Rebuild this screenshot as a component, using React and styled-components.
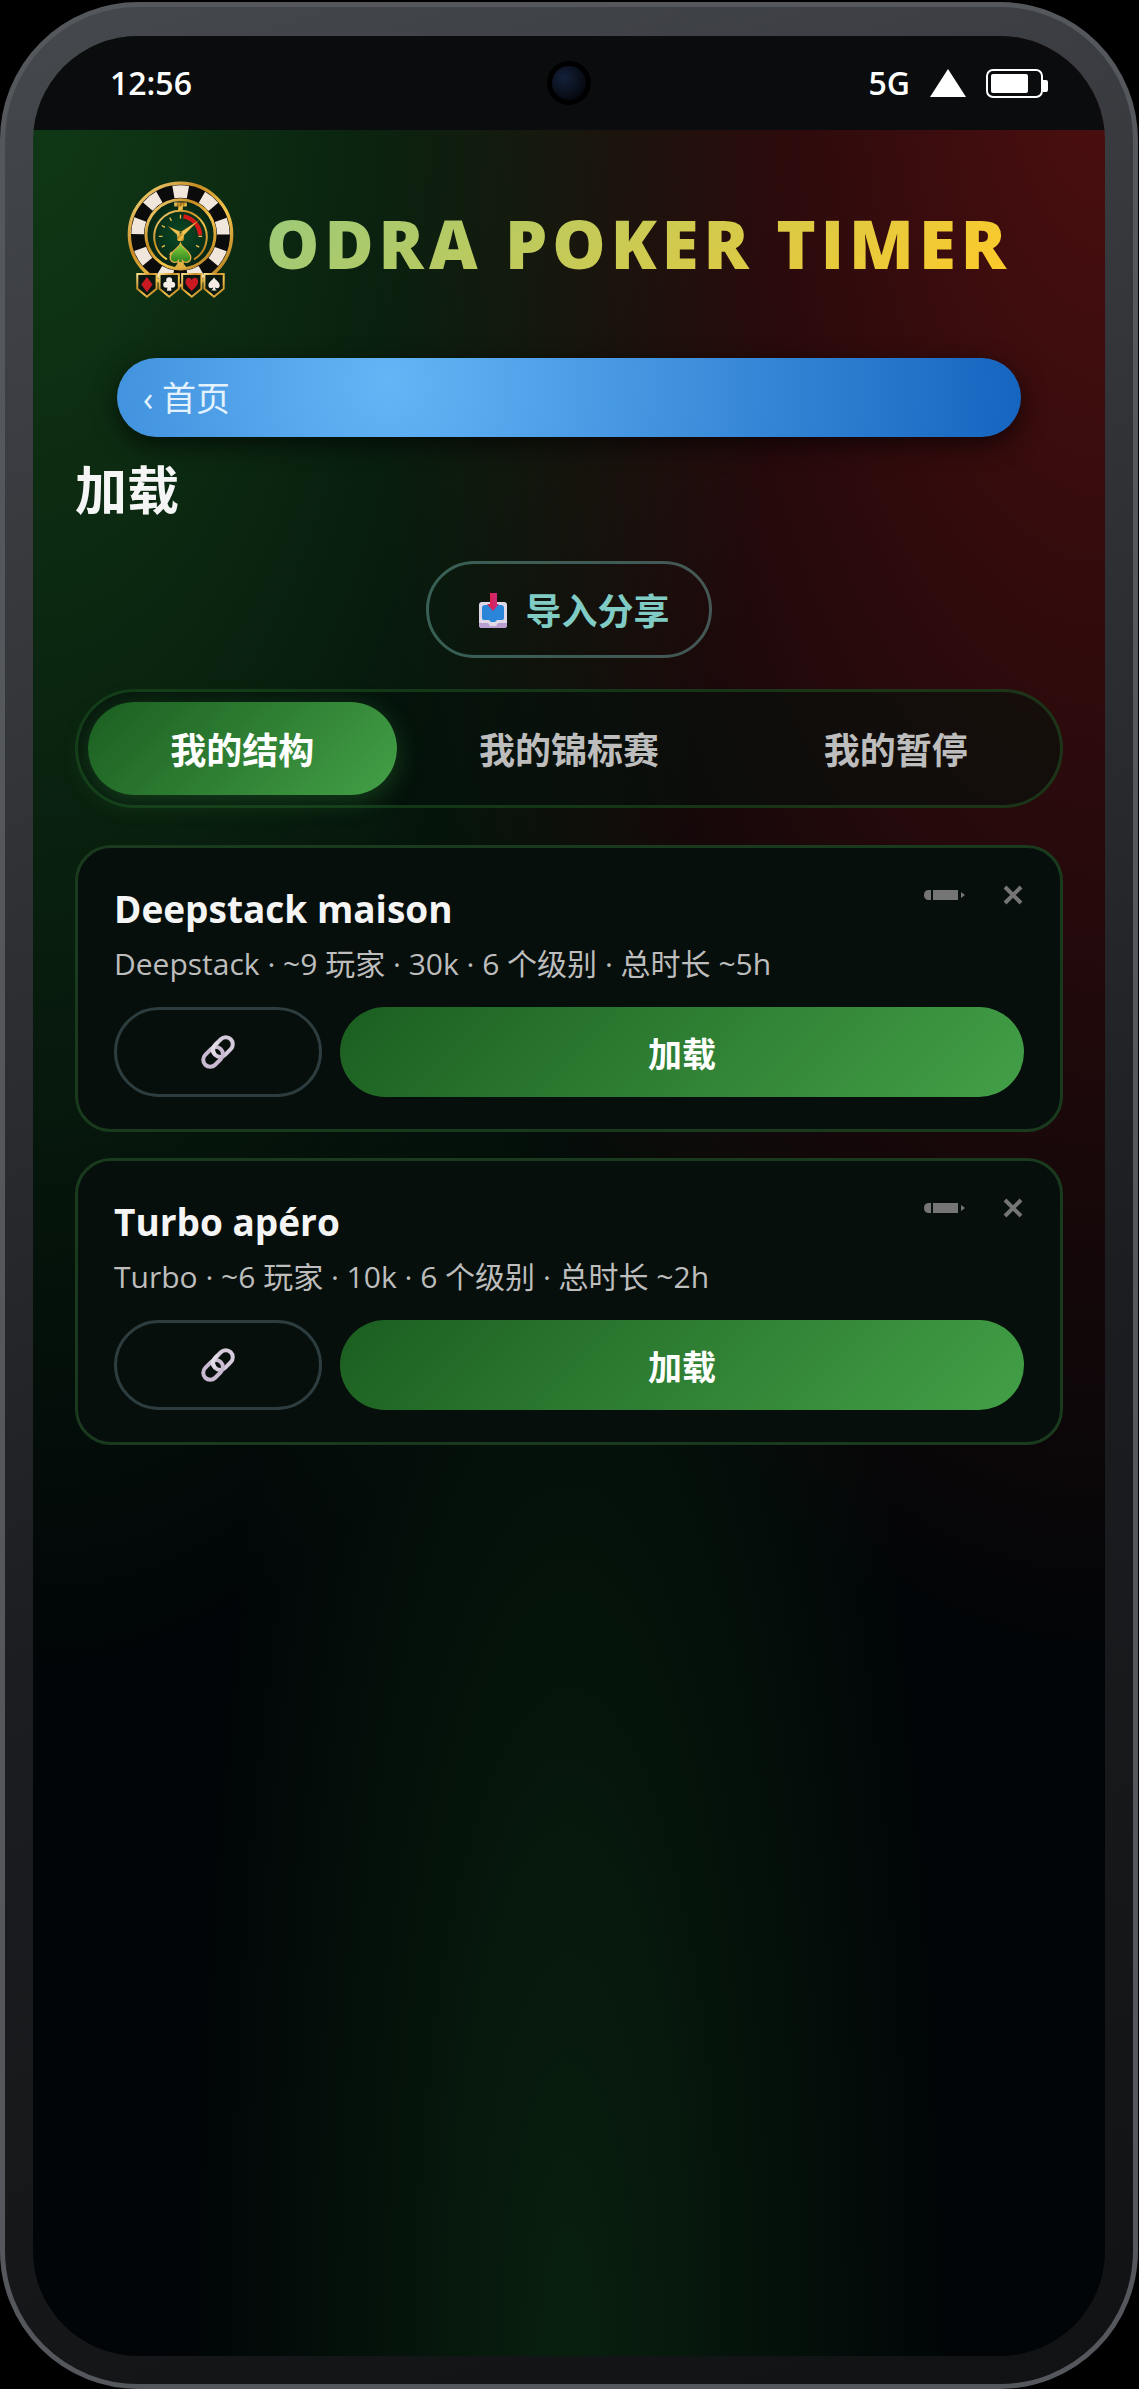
import React, { useState } from "react"
import styled, { createGlobalStyle } from "styled-components"

const structures = [
  {
    id: "deepstack",
    name: "Deepstack maison",
    meta: "Deepstack · ~9 玩家 · 30k · 6 个级别 · 总时长 ~5h",
  },
  {
    id: "turbo",
    name: "Turbo apéro",
    meta: "Turbo · ~6 玩家 · 10k · 6 个级别 · 总时长 ~2h",
  },
]

const tabs = ["我的结构", "我的锦标赛", "我的暂停"]

function App() {
  const [activeTab, setActiveTab] = useState(tabs[0])

  return (
    <Phone>
      <GlobalStyle />
      <Screen>
        <StatusBar>
          <span>12:56</span>
          <Camera />
          <StatusIcons>
            <span>5G</span>
            <SignalIcon />
            <BatteryIcon />
          </StatusIcons>
        </StatusBar>
        <Content>
          <Brand>
            <Logo />
            <BrandName>ODRA POKER TIMER</BrandName>
          </Brand>
          <HomeLink href="#home">‹ 首页</HomeLink>
          <PageTitle>加载</PageTitle>
          <ImportButton type="button">
            <InboxIcon />
            导入分享
          </ImportButton>
          <TabList role="tablist">
            {tabs.map((tab) => (
              <Tab
                key={tab}
                type="button"
                role="tab"
                aria-selected={tab === activeTab}
                $active={tab === activeTab}
                onClick={() => setActiveTab(tab)}
              >
                {tab}
              </Tab>
            ))}
          </TabList>
          <CardList>
            {structures.map((item) => (
              <Card key={item.id}>
                <CardHead>
                  <CardTitle>{item.name}</CardTitle>
                  <CardTools>
                    <ToolButton type="button" aria-label="编辑">
                      <PencilIcon />
                    </ToolButton>
                    <ToolButton type="button" aria-label="删除">
                      <CrossIcon />
                    </ToolButton>
                  </CardTools>
                </CardHead>
                <CardMeta>{item.meta}</CardMeta>
                <CardActions>
                  <LinkButton type="button" aria-label="分享">
                    <ChainIcon />
                  </LinkButton>
                  <LoadButton type="button">加载</LoadButton>
                </CardActions>
              </Card>
            ))}
          </CardList>
        </Content>
      </Screen>
    </Phone>
  )
}

export default App

///////////////////// Icons ////////////////////////

function SignalIcon() {
  return (
    <svg width="36" height="28" viewBox="0 0 36 28" aria-hidden="true">
      <path d="M18 0 36 28H0z" fill="#fff" />
    </svg>
  )
}

function BatteryIcon() {
  return (
    <svg width="62" height="29" viewBox="0 0 62 29" aria-hidden="true">
      <rect x="1" y="1" width="55" height="27" rx="6" fill="none" stroke="#fff" strokeWidth="2" />
      <rect x="5" y="5" width="37" height="19" rx="2" fill="#fff" />
      <path d="M57 11h3q2 0 2 2v8q0 2-2 2h-3z" fill="#fff" />
    </svg>
  )
}

function InboxIcon() {
  return (
    <svg width="28" height="36" viewBox="0 0 28 36" aria-hidden="true">
      <defs>
        <linearGradient id="arrow" x1="0" x2="1">
          <stop offset="0" stopColor="#e61b3f" />
          <stop offset="1" stopColor="#c22f86" />
        </linearGradient>
      </defs>
      <rect x="0" y="10" width="28" height="26" rx="3" fill="#e0d8e6" />
      <path d="M0 31h9l2 3h6l2-3h9v2q0 3-3 3H3q-3 0-3-3z" fill="#b99fd2" />
      <path d="M6 13h16q3 0 3 3v10q0 2-2 2h-5l-2 2h-4l-2-2H5q-2 0-2-2V16q0-3 3-3z" fill="#2b85d8" />
      <path d="M11 1h7v11h2L14 19 8 12h3z" fill="url(#arrow)" />
    </svg>
  )
}

function PencilIcon() {
  return (
    <svg width="41" height="12" viewBox="0 0 41 12" aria-hidden="true">
      <path d="M7 1v10H5Q0 11 0 6t5-5zM9 1h25v10H9zM37 3l4 3-4 3z" fill="#757575" />
    </svg>
  )
}

function CrossIcon() {
  return (
    <svg width="22" height="22" viewBox="0 0 22 22" aria-hidden="true">
      <path d="m3 3 16 16M19 3 3 19" stroke="#757575" strokeWidth="4" />
    </svg>
  )
}

function ChainIcon() {
  return (
    <svg width="34" height="34" viewBox="0 0 34 34" fill="none" aria-hidden="true">
      <g transform="rotate(-45 17 17)" strokeWidth="4">
        <rect x="13" y="10" width="22" height="14" rx="7" stroke="#d6cbdc" />
        <rect x="-1" y="10" width="22" height="14" rx="7" stroke="#c9bad2" />
        <path d="M13 17q0-7 7-7h4" stroke="#e3dae8" />
      </g>
    </svg>
  )
}

const shields = [74, 141, 209, 276]
const ticks = [-150, -120, -90, -60, -30, 0, 90, 120]

function Logo() {
  return (
    <svg width="107" height="118" viewBox="46 32 322 354" role="img" aria-label="Odra Poker Timer">
      <defs>
        <linearGradient id="gold" x1="0" y1="0" x2="1" y2="1">
          <stop offset="0" stopColor="#fbe28a" />
          <stop offset="0.35" stopColor="#c58a22" />
          <stop offset="0.6" stopColor="#f4c64e" />
          <stop offset="1" stopColor="#a86d14" />
        </linearGradient>
        <radialGradient id="face">
          <stop offset="0" stopColor="#0b4a25" />
          <stop offset="1" stopColor="#052413" />
        </radialGradient>
        <linearGradient id="leaf" x1="0" y1="0" x2="0" y2="1">
          <stop offset="0" stopColor="#8bd63a" />
          <stop offset="1" stopColor="#116b1b" />
        </linearGradient>
        <path id="spade" d="M0-19C3-11 17-5 17 6c0 8-9 11-14 5 0 5 2 8 6 10H-9c4-2 6-5 6-10-5 6-14 3-14-5C-17-5-3-11 0-19z" />
      </defs>
      <circle cx="207" cy="192" r="154" fill="#0b0b0b" stroke="url(#gold)" strokeWidth="10" />
      <circle
        cx="207"
        cy="192"
        r="129"
        fill="none"
        stroke="#f1e6dc"
        strokeWidth="38"
        pathLength="18"
        strokeDasharray="1 1"
        strokeDashoffset="0.5"
        transform="rotate(-90 207 192)"
      />
      <circle cx="207" cy="192" r="104" fill="url(#face)" stroke="url(#gold)" strokeWidth="9" />
      <path d="M164 266A79 79 0 1 1 250 266" fill="none" stroke="url(#gold)" strokeWidth="6" strokeLinecap="round" />
      <path d="M216 138A60 60 0 0 1 266 194" fill="none" stroke="#d31a1a" strokeWidth="13" />
      {ticks.map((angle) => (
        <path
          key={angle}
          d="M207 144v-11"
          stroke="#e9bd4c"
          strokeWidth="4"
          transform={`rotate(${angle} 207 198)`}
        />
      ))}
      <path d="M188 96h38v12h-38zM200 108h14v14h-14z" fill="url(#gold)" />
      <path d="M199 96v12M208 96v12M217 96v12" stroke="#6d450c" strokeWidth="2" />
      <path d="M213 199 261 150 203 188zM201 197 170 168 211 186z" fill="#f0c352" stroke="#8d5d12" strokeWidth="1" />
      <rect x="197" y="190" width="20" height="22" rx="5" fill="url(#gold)" />
      <path
        d="M207 219c4 14 31 24 31 43 0 15-17 18-25 9 0 9 3 15 9 20h-30c6-5 9-11 9-20-8 9-25 6-25-9 0-19 27-29 31-43z"
        fill="url(#leaf)"
        stroke="#e2b045"
        strokeWidth="4"
      />
      <path d="M201 275h12l3 13 8 5h-34l8-5z" fill="#e2b045" />
      {shields.map((x) => (
        <path
          key={x}
          d={`M${x + 3} 311h58v45l-29 24-29-24z`}
          fill="#0a1710"
          stroke="url(#gold)"
          strokeWidth="6"
        />
      ))}
      <path d="M106 320 123 343 106 366 89 343z" fill="#c91a22" />
      <g fill="#f5ede5">
        <circle cx="173" cy="330" r="9" />
        <circle cx="164" cy="344" r="9" />
        <circle cx="182" cy="344" r="9" />
        <path d="M170 338h6l4 24h-14z" />
        <use href="#spade" x="308" y="340" />
      </g>
      <path d="M241 363C232 352 222 346 222 334c0-13 15-15 19-4 4-11 19-9 19 4 0 12-10 18-19 29z" fill="#c91a22" />
    </svg>
  )
}

///////////////////// Styles ////////////////////////

const GlobalStyle = createGlobalStyle`
  * {
    box-sizing: border-box;
  }

  body {
    margin: 0;
    background: #000;
    color: #f5f5f5;
    font-family: "Open Sans", "Noto Sans CJK SC", sans-serif;
  }

  button {
    padding: 0;
    border: 0;
    background: none;
    font-family: inherit;
    cursor: pointer;
  }

  svg {
    display: block;
    flex: none;
  }
`

const Phone = styled.div`
  display: flex;
  min-height: calc(100vh - 2px);
  margin: 2px 1px 0 0;
  padding: 29px 28px 28px;
  border: 5px solid #54575c;
  border-radius: 138px;
  background: linear-gradient(160deg, #45484d 0%, #1c1d20 60%, #111214 100%);
`

const Screen = styled.main`
  display: flex;
  flex: 1;
  flex-direction: column;
  min-width: 0;
  overflow: hidden;
  border-radius: 105px;
  background:
    radial-gradient(ellipse at top left, rgba(27, 94, 32, 0.6), transparent 50%),
    radial-gradient(ellipse at top right, rgba(183, 28, 28, 0.42), transparent 50%),
    radial-gradient(ellipse at bottom, rgba(27, 94, 32, 0.3), transparent 50%),
    #010507;
`

const StatusBar = styled.header`
  display: grid;
  grid-template-columns: 1fr auto 1fr;
  align-items: center;
  height: 94px;
  padding: 0 57px 0 77px;
  background: #0a0c0e;
  color: #fff;
  font-size: 32px;
  font-weight: 600;
  line-height: 44px;
`

const Camera = styled.div`
  width: 44px;
  height: 44px;
  margin-right: 20px;
  border: 5px solid #000;
  border-radius: 50%;
  background: radial-gradient(circle at 35% 35%, #14213a, #04060b 80%);
`

const StatusIcons = styled.div`
  display: flex;
  align-items: center;
  justify-content: flex-end;
  gap: 20px;
`

const Content = styled.div`
  display: flex;
  flex-direction: column;
  padding: 51px 42px 60px;
`

const Brand = styled.div`
  display: flex;
  align-items: center;
  justify-content: center;
  gap: 32px;
  margin-bottom: 59px;
`

const BrandName = styled.div`
  padding-top: 6px;
  background: linear-gradient(135deg, #99ca7b, #ffca28);
  background-clip: text;
  -webkit-background-clip: text;
  color: transparent;
  font-size: 67px;
  font-weight: 800;
  letter-spacing: 5px;
  line-height: 94px;
  white-space: nowrap;
`

const HomeLink = styled.a`
  margin: 0 42px;
  padding: 18px 26px 17px;
  border-radius: 40px;
  background: radial-gradient(circle at 30% 30%, #64b5f6, #1565c0);
  box-shadow: 0 8px 24px rgba(0, 0, 0, 0.6);
  color: #e3f2fd;
  font-size: 34px;
  line-height: 44px;
  text-decoration: none;
`

const PageTitle = styled.h1`
  margin: 23px 0 41px;
  font-size: 52px;
  font-weight: 700;
  line-height: 60px;
`

const ImportButton = styled.button`
  display: flex;
  align-items: center;
  align-self: center;
  gap: 18px;
  height: 97px;
  padding: 0 39px 0 50px;
  border: 3px solid rgba(128, 203, 196, 0.4);
  border-radius: 49px;
  color: #80cbc4;
  font-size: 36px;
  font-weight: 700;
`

const TabList = styled.div`
  display: flex;
  margin: 31px 0 37px;
  padding: 10px;
  border: 3px solid rgba(46, 125, 50, 0.35);
  border-radius: 60px;
  background: rgba(5, 17, 11, 0.6);
`

const Tab = styled.button`
  flex: 1 1 auto;
  height: 93px;
  border-radius: 47px;
  background: ${(props) =>
    props.$active ? "linear-gradient(135deg, #1b5e20, #43a047)" : "none"};
  box-shadow: ${(props) =>
    props.$active ? "0 6px 24px rgba(46, 125, 50, 0.4)" : "none"};
  color: ${(props) => (props.$active ? "#fff" : "#bdbdbd")};
  font-size: 36px;
  font-weight: 700;
`

const CardList = styled.div`
  display: grid;
  gap: 26px;
`

const Card = styled.article`
  padding: 35px 36px 32px;
  border: 3px solid #1a3a1e;
  border-radius: 36px;
  background: #060f0b;
`

const CardHead = styled.div`
  display: flex;
  align-items: flex-start;
  justify-content: space-between;
  margin-bottom: 8px;
`

const CardTitle = styled.h2`
  margin: 0;
  font-size: 37px;
  font-weight: 700;
  line-height: 52px;
`

const CardTools = styled.div`
  display: flex;
  gap: 37px;
`

const ToolButton = styled.button`
  display: flex;
  align-items: center;
  height: 24px;
`

const CardMeta = styled.p`
  margin: 0 0 22px;
  color: #bdbdbd;
  font-size: 30px;
  line-height: 42px;
`

const CardActions = styled.div`
  display: grid;
  grid-template-columns: 208px 1fr;
  gap: 18px;
`

const LinkButton = styled.button`
  display: flex;
  align-items: center;
  justify-content: center;
  height: 90px;
  border: 3px solid #2d3d3f;
  border-radius: 45px;
`

const LoadButton = styled.button`
  height: 90px;
  border-radius: 45px;
  background: linear-gradient(135deg, #1b5e20, #43a047);
  color: #fff;
  font-size: 34px;
  font-weight: 700;
`
